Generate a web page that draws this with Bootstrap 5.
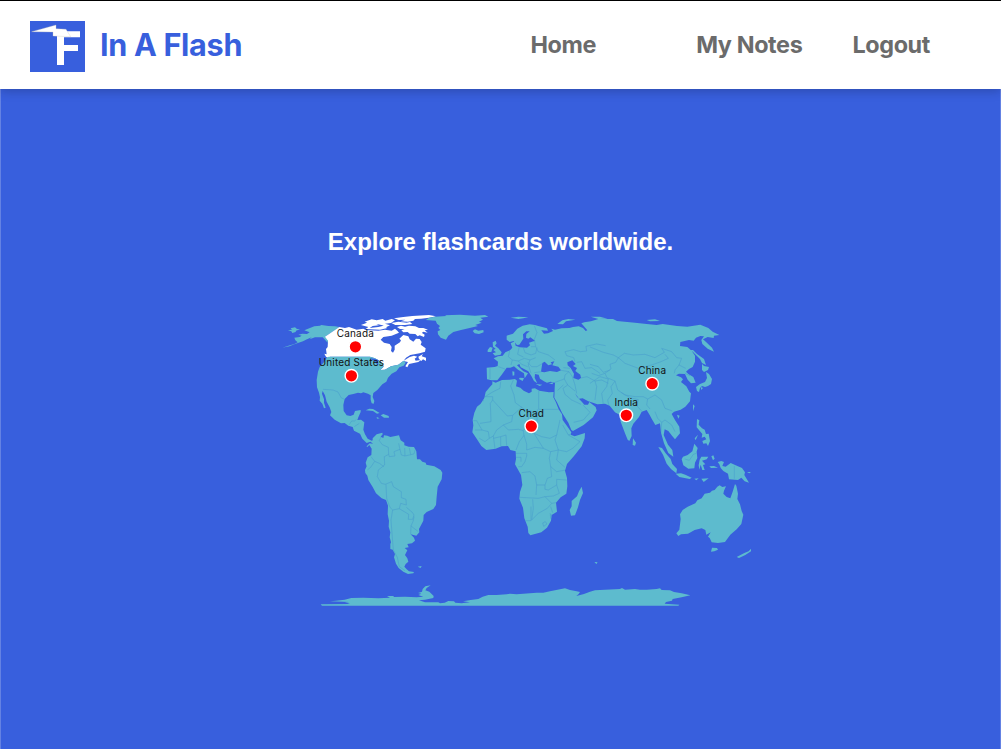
<!DOCTYPE html>
<html lang="en">
<head>
<meta charset="utf-8">
<meta name="viewport" content="width=device-width, initial-scale=1">
<title>In A Flash</title>
<link href="https://cdn.jsdelivr.net/npm/bootstrap@5.3.0/dist/css/bootstrap.min.css" rel="stylesheet">
<style>
body{background:#385fdd;font-family:Inter,sans-serif;overflow:hidden}
.page{height:749px;border:solid #6482e3;border-width:0 1px}
.topbar{height:89px;margin:0 -1px;background:#fff;border-top:1px solid #000;padding:0 71px 0 30px;box-shadow:0 2px 10px rgba(0,0,0,.22)}
.logo{margin-top:2px;margin-right:15px}
.brand-name{font-size:30.6px;font-weight:700;color:#385fdd;letter-spacing:-.3px;line-height:40px}
.menu a{font-size:23.4px;font-weight:700;color:#6b6b6b;text-decoration:none;letter-spacing:-.37px;line-height:30px;white-space:nowrap}
.home-link{margin-right:100px}
.notes-link{margin-right:50px}
.tagline{font:700 24px/30px "Liberation Sans",sans-serif;color:#fff;margin:138px 0 48px}
.land{fill:#5dbbce}.sea{fill:#385fdd}.canada{fill:#fff}
.border-lines{fill:none;stroke:#489dce;stroke-width:1.7;stroke-linejoin:round}
.pin circle{fill:red;stroke:#fff;stroke-width:1.4}
.pin text{font:10px Inter,sans-serif;letter-spacing:.16px;text-anchor:middle;fill:#111}
</style>
</head>
<body>
<div class="page">
<header class="topbar navbar flex-nowrap justify-content-between">
  <div class="d-flex align-items-center">
    <svg class="logo" width="55" height="51" viewBox="0 0 165 153"><path fill="#385fdd" d="M0 0h165v153H0z"/><path fill="#fff" d="M81 31h69v18h-48v23h42v18h-42v42H81z"/><path fill="#fff" stroke="#c8c5bb" d="M5 32 78 12v11l30 2 14 22-53-2V33z"/></svg>
    <span class="brand-name">In A Flash</span>
  </div>
  <nav class="menu d-flex"><a class="home-link" href="#">Home</a><a class="notes-link" href="#">My Notes</a><a href="#">Logout</a></nav>
</header>
<main class="d-flex flex-column align-items-center">
<h1 class="tagline">Explore flashcards worldwide.</h1>
<svg width="480" height="310" viewBox="261 305 480 310" overflow="visible">
  <defs>
    <clipPath id="clip-south-america"><use href="#south-america"/></clipPath>
    <clipPath id="clip-eurasia"><use href="#eurasia"/></clipPath>
    <clipPath id="clip-africa"><use href="#africa"/></clipPath>
  </defs>
  <!-- North America and Greenland -->
  <g transform="translate(275 305) scale(.33333)">
    <path class="land" d="M22 128 45 121 58 117 68 112 61 106 58 98 74 96 80 92 70 89 82 86 96 87 104 82 88 76 118 64 135 62 139 60 160 63 180 64 193 66 150 95 159 101 158 113 150 104 143 97 120 97 104 103 110 97 96 103 84 109 60 117 43 124zM39 76 51 74 47 70 60 67 66 72 75 73 63 77 62 81 52 84 49 79z"/>
    <path class="canada" d="M193 66 210 69 222 66 245 74 265 71 272 75 310 77 330 74 350 77 360 71 367 77 372 83 350 92 325 96 317 104 327 113 344 117 350 126 348 138 354 143 359 134 359 122 375 112 378 106 373 101 385 90 400 94 404 103 415 110 423 101 434 102 440 111 437 119 452 130 450 140 434 145 406 150 393 158 386 167 404 156 417 152 427 155 419 161 422 167 438 165 430 171 402 177 397 187 391 184 399 171 385 168 370 179 348 184 330 194 316 195 326 185 318 170 300 160 285 155 165 155 161 160 153 155 148 146 155 148 153 132 158 126 159 107 150 95z"/>
    <path class="canada" d="M258 60 280 52 300 55 312 61 293 63 284 69 310 66 325 62 337 69 315 74 272 72 280 66zM269 50 290 43 305 46 323 42 331 47 350 42 360 46 348 54 330 56 345 61 333 67 322 61 306 57 285 56zM357 40 385 36 412 33 462 30 483 34 462 38 438 41 420 42 415 47 398 50 377 49 391 44 371 45zM349 54 370 50 395 53 405 51 412 57 390 60 361 60zM366 66 378 62 390 65 402 62 421 64 432 69 445 69 459 74 449 76 458 83 444 80 441 84 449 89 447 96 434 91 428 94 421 87 404 86 398 81 385 82 379 76 389 73 375 72zM430 155 444 147 440 154 453 158 453 168 444 163 439 168 432 162z"/>
    <path class="land" d="M452 45 463 38 480 35 514 33 510 31 555 29 600 32 630 30 640 35 616 38 624 44 612 50 620 53 601 60 609 63 584 69 558 75 535 81 520 92 513 104 497 98 489 88 488 79 496 75 490 69 495 63 486 56 482 47zM593 78 600 73 610 77 625 75 626 82 612 87 599 85z"/>
    <path class="land" d="M155 158 161 155 285 155 300 160 319 170 326 184 316 195 330 194 348 184 370 179 386 167 392 173 386 182 373 187 364 199 350 206 339 218 334 230 322 238 307 255 295 264 293 276 298 288 296 296 290 295 287 284 287 271 279 266 265 262 258 265 249 263 235 267 221 270 209 282 205 300 206 318 215 331 226 333 236 329 240 318 257 315 257 321 250 337 247 345 258 344 268 352 265 374 270 388 278 401 290 407 302 402 300 420 286 410 275 414 262 401 255 386 237 377 233 366 220 362 209 354 198 355 179 344 165 331 169 321 164 307 155 290 150 271 143 258 141 266 147 283 147 293 152 308 147 310 142 296 134 287 135 277 132 263 126 247 125 225 129 200 134 186 148 170z"/>
    <path class="land" d="M272 316 283 311 294 312 314 324 306 326 294 318zM317 331 325 327 341 333 342 338 327 338zM305 336 314 340 306 341z"/>
    <path class="border-lines" d="m144 253 30 2 15 6 10 18 8 3M222 360l8-12h9l5-5m-6 22 15-10"/>
    <path class="sea" d="m284 160 14 1 14 5-5 4 4 8-4 2-6-10-8-4z"/>
  </g>
  <!-- South America -->
  <g transform="translate(340 420) scale(.33333)">
    <path id="south-america" class="land" d="M80 79 89 70 98 71 98 55 110 43 127 38 128 43 122 50 130 54 132 46 142 47 151 51 177 46 182 61 193 68 193 76 206 80 222 81 229 94 231 118 240 118 247 125 257 128 259 134 283 139 302 150 307 158 305 178 293 200 290 230 288 255 280 267 260 276 251 285 250 302 237 327 238 337 229 347 212 343 222 353 225 362 216 370 202 372 206 382 194 384 202 391 195 405 202 415 205 425 197 432 193 440 200 448 207 454 222 456 220 460 204 462 190 455 176 444 168 431 162 412 165 402 158 389 151 387 151 372 153 367 149 352 151 337 146 320 147 302 143 283 144 257 138 240 125 235 108 220 98 201 85 180 82 167 76 159 75 150 80 139 77 128 83 112 94 105 95 86 88 75 81 82zM233 440 245 438 242 444z"/>
    <path class="border-lines" clip-path="url(#clip-south-america)" d="M126 43 118 62 127 74 145 82 146 103 133 110 134 135 115 150 112 170 124 190 136 193 155 185 160 200 184 215 184 233 198 238 199 255 182 250 178 266 158 270 153 300 156 340 160 390 172 412 178 440 195 452M138 194 140 235 150 262 158 270M178 266 206 283 205 298 218 298 222 285 217 277 199 262M222 290 220 302 213 318 235 335M213 318 212 343M93 110 104 124 92 142 82 150M104 124 118 130 132 140M146 103 148 110 165 108 162 95 180 88 176 70M180 88 184 105 195 108 194 84M195 108 212 104 208 84M212 104 222 102 226 88"/>
  </g>
  <!-- Europe and Asia -->
  <g transform="translate(475 305) scale(.33333)">
    <path id="eurasia" class="land" d="M35 188 59 186 68 183 69 170 56 160 69 154 83 152 91 142 105 136 112 128 107 115 119 109 122 122 134 127 156 128 165 121 162 113 180 107 166 97 160 101 153 98 154 87 164 79 154 79 144 88 145 101 133 119 126 120 116 108 104 111 95 104 95 92 114 86 127 71 143 62 164 58 180 60 190 63 216 70 219 77 199 76 207 86 219 85 234 78 229 71 240 74 260 70 283 69 294 66 311 64 324 69 332 78 337 76 328 65 319 55 328 52 348 49 370 42 391 42 414 42 426 48 449 50 480 53 515 57 545 60 563 57 606 63 637 65 676 59 700 69 713 80 733 90 717 92 716 99 698 96 684 103 694 112 711 128 717 140 698 131 682 117 679 105 687 94 676 93 663 98 656 107 642 105 616 111 615 123 637 126 650 137 660 152 660 170 653 186 642 192 633 200 640 207 655 216 662 233 648 235 638 224 630 207 612 206 603 211 618 217 624 223 618 231 634 244 643 260 648 265 645 289 631 305 617 314 597 320 590 327 600 345 613 365 615 385 600 403 591 392 580 378 569 373 566 390 579 419 592 435 595 455 580 444 567 415 558 383 555 355 541 360 530 341 524 330 515 315 500 320 492 336 475 356 469 370 470 393 463 408 458 404 450 385 437 350 435 330 420 322 404 302 390 296 367 298 340 289 323 280 312 281 300 265 306 275 321 291 328 299 339 299 343 291 362 306 365 316 354 337 326 360 294 378 289 375 280 353 261 323 246 292 238 278 239 250 240 233 227 230 216 233 207 229 195 221 191 209 180 207 179 218 187 235 177 228 169 213 160 199 137 187 133 177 126 181 145 199 159 205 149 220 147 205 129 194 117 184 106 188 95 188 86 201 79 211 67 226 50 226 36 223z"/>
    <path class="land" d="M53 145 63 142 55 135 62 131 54 125 53 112 62 107 65 115 60 122 70 130 80 142 77 149 60 152zM38 135 45 126 53 128 49 141 38 141zM107 38 130 35 160 37 145 40 130 42zM247 57 262 46 280 42 301 44 273 49 264 58zM347 35 375 35 398 41 370 42zM515 45 540 43 555 48 525 49zM134 218 147 219 143 228 132 222zM112 199 118 200 118 211 113 212zM182 237l20 2-8 4zM222 235l14-3-4 6z"/>
    <path class="sea" d="M198 200 202 174 209 170 220 181 231 178 227 172 238 169 232 181 250 185 258 196 246 201 225 198 208 202zM277 172 292 166 302 177 294 183 306 189 301 198 316 209 318 219 310 224 295 219 297 206 287 189 278 181z"/>
    <g clip-path="url(#clip-eurasia)"><path class="border-lines" d="M178 62 186 83 178 103 182 125 168 125M180 108 163 109M182 125 190 140 220 150 240 165M145 128 150 143 168 150 182 145 186 128M104 138 100 155 112 165 130 168 148 160 165 165 182 158M132 128 128 148 145 156M112 165 108 180M130 168 140 178 158 185M158 172 170 185 186 185 202 176M165 165 160 180 168 205M178 203 200 200M45 190V222M70 185 90 192M258 196 282 200 292 215 300 240M265 188 285 190M282 200 270 210 268 222 240 232M268 222 278 240 300 258M265 240 248 256M278 240 264 250 270 268 290 285 318 298M324 300 345 322 325 345 296 352M300 170 296 158 275 152 270 140 296 134 316 140 335 138 333 124 365 117 392 122M305 172 320 170 330 190 350 188 375 205M318 219 336 215 360 228 365 245 360 285M360 228 380 225 400 235M300 240 305 265"/>
    <!-- Central, south and east Asia -->
    <path class="border-lines" d="M345 126 360 132 385 142 415 150 430 158 422 172 405 178 408 192 390 205 396 218 420 228 428 255 450 270 480 275 505 275 518 282 515 300 525 312M430 158 448 145 475 150 510 148 540 158 568 142 560 130 590 140 605 158 620 160 612 180 632 190M430 158 450 175 490 190 530 180 558 170 580 160 570 148M345 178 370 185 385 202 405 195M350 205 370 212 390 205M345 235 375 215 400 222M400 222 395 245 380 265 385 298M420 228 408 245 412 265 398 285 402 302M438 262 465 278 490 284M490 284 485 302 500 318M518 282 540 270 560 285 570 310 592 318M540 320 548 340 560 352 570 345 590 360 600 380M560 352 558 385M612 180 600 195 598 205M630 205 645 212"/></g>
  </g>
  <!-- Africa -->
  <g transform="translate(460 370) scale(.33333)">
    <path id="africa" class="land" d="M97 34 107 38 126 30 149 29 165 27 171 32 168 49 181 53 191 62 207 70 215 65 215 56 225 55 238 62 267 67 281 66 280 82 287 95 296 118 306 133 308 150 321 168 334 187 332 194 344 199 375 189 374 205 365 229 342 258 321 282 315 302 321 324 322 349 319 371 302 382 288 398 291 425 275 435 273 452 261 473 244 487 211 496 205 489 203 470 193 445 189 413 178 386 180 366 187 345 183 315 165 283 168 267 167 244 151 240 144 228 125 229 107 236 79 240 64 228 52 209 37 187 40 166 38 150 43 128 51 110 62 101 73 84 77 66 87 54 97 43zM365 350 369 369 360 390 354 412 345 436 333 437 329 420 335 409 335 393 351 379 357 364z"/>
    <path class="border-lines" clip-path="url(#clip-africa)" d="M122 35 120 55 98 66 75 80H98V90L142 138 158 136 185 112 196 120 212 122 232 135M72 92H50M98 90 91 100 93 155 60 160M160 30 152 48 162 75 166 98 185 112M236 62V118H300M232 118V135L230 165 218 175 222 190M158 136 155 155 130 165 110 180 100 198M40 152 50 152 66 180 45 180M66 180 85 185 88 205 75 215 58 205M88 205 100 198 105 237M100 205 122 200V230M122 200 138 195 140 228M130 165 145 180 175 178 190 182 192 196 178 215 168 240M192 196 200 222 200 240 225 232 250 235 222 190 245 200 270 205 290 195 300 150M205 122 206 160 190 182M290 195 285 210 295 240 320 245 338 235 360 215 325 195 308 165M325 195 338 190M295 240 290 270 315 292M250 235 272 245 295 240M272 245 268 265 272 290 290 305 318 300M272 290 275 320 262 325 255 345 230 345 225 318 210 305 185 308M230 345 228 375M180 382 235 385 255 380 275 400 288 398M255 345V358L265 360 290 345 290 328 320 330M290 345 298 370 280 378 255 380M218 388 220 415 215 450 235 430 262 415 275 400M213 410V452H195M272 410 278 428M168 250H200V258L195 275 185 290 175 290M168 262H183V275M248 459l8-4 5 7-10 7zM271 431l6 7-5 7z"/>
  </g>
  <!-- South-east Asia and Oceania -->
  <g transform="translate(580 390) scale(.33333)">
    <path class="land" d="M308 360 323 350 346 340 352 331 365 325 374 311 390 308 396 302 404 300 412 290 419 286 427 291 438 289 432 302 430 311 440 321 451 325 458 305 465 282 469 287 474 311 472 327 480 343 485 363 490 374 484 402 470 418 451 434 435 456 414 459 395 457 389 444 384 440 392 427 379 434 376 420 365 415 344 420 324 431 303 433 295 438 289 430 298 419 302 387 300 373zM396 473 411 474 414 479 403 484 393 485zM470 501 493 489 506 484 513 476 513 484 496 495 477 504zM413 216 424 213 432 216 427 228 437 230 452 219 467 226 486 234 495 247 493 255 507 278 494 274 484 263 474 270 447 268 444 251 430 243 422 234 418 223zM501 246 513 246 508 250zM309 200 323 195 337 184 343 161 353 174 350 185 352 204 345 218 343 235 325 236 310 226 305 208zM235 171 246 174 257 190 272 207 277 222 291 237 289 250 273 237 260 221 249 194zM287 251 303 250 316 254 335 263 329 267 298 261zM343 266l13-1-7 6zM364 266l22-1-15 11zM359 209 364 200 385 200 380 208 366 212 376 223 369 225 374 240 367 240 362 224 358 239 356 226zM394 199l6-3 4 10-5 5zM388 229l14-1 12 5-21 1zM351 87 358 91 356 104 366 115 374 119 378 132 386 131 390 153 384 168 379 160 370 161 367 153 379 148 374 140 365 143 367 132 360 124 350 112zM344 145l10-11-7 17zM339 43 344 48 339 64zM291 74 299 77 295 86zM159 145 168 158 165 167 158 165zM46 517h7l-4 5z"/>
    <path class="border-lines" d="M463 228v38M314 207l14 4 12-18 9-3"/>
  </g>
  <!-- Sakhalin, Japan -->
  <path class="land" d="m690 350 3 2 7 7 2 4 4 2-2-6-7-5-4-4zM702 364l2 2 5 1-1 3-4 2-2-2zM706 372l3 2 3 5-1 5-3 2-3 1-3-1-2 2-1 4-2-1-1-4 4-3 5-2 2-4zM701 387l2 1-2 2z"/>
  <!-- Antarctica -->
  <g transform="translate(310 550) scale(.33333)">
    <path class="land" d="M32 163 120 162 112 159 104 158 118 156 60 154 78 152 104 149 124 144 160 143 205 145 240 143 231 138 250 138 252 141 285 140 320 142 340 140 325 135 334 131 324 129 336 125 338 117 346 109 362 106 350 114 346 121 358 125 371 138 370 144 345 149 327 151 345 157 385 157 390 160 404 158 415 153 432 154 436 158 455 160 480 157 459 154 482 150 505 147 518 140 535 135 560 135 590 133 600 131 620 133 660 130 680 128 700 128 720 124 750 118 765 115 780 120 800 124 810 126 806 132 799 138 822 132 840 125 855 121 885 119 930 117 936 114 945 119 975 117 990 119 1010 119 1040 117 1050 115 1055 120 1080 121 1092 126 1115 130 1141 136 1115 142 1088 147 1086 152 1068 156 1064 161 1108 164 1105 167H36zM853 37l7-1-1 5z"/>
  </g>
  <g class="pin"><circle cx="355.4" cy="346.8" r="6.3"/><text x="355.4" y="337">Canada</text></g>
  <g class="pin"><circle cx="351.4" cy="375.8" r="6.3"/><text x="351.4" y="366">United States</text></g>
  <g class="pin"><circle cx="531.3" cy="426.2" r="6.3"/><text x="531.3" y="417">Chad</text></g>
  <g class="pin"><circle cx="652.2" cy="383.7" r="6.3"/><text x="652.2" y="374">China</text></g>
  <g class="pin"><circle cx="626.3" cy="415.3" r="6.3"/><text x="626.3" y="406">India</text></g>
</svg>
</main>
</div>
<script src="https://cdn.jsdelivr.net/npm/bootstrap@5.3.0/dist/js/bootstrap.bundle.min.js"></script>
</body>
</html>
